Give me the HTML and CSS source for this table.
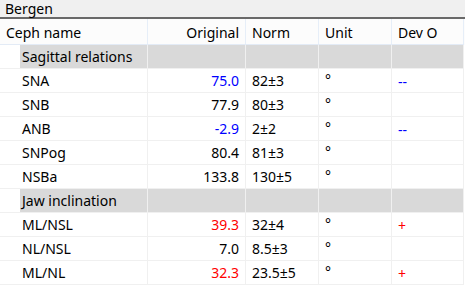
FILE: index.html
```html
<!DOCTYPE html>
<html lang="en">
<head>
    <meta charset="UTF-8">
    <title>Bergen</title>
    <link rel="stylesheet" href="styles.css">
</head>
<body>
    <div class="panel-title">Bergen</div>
    <div class="ceph-table">
        <div class="row head">
            <div class="cell">Ceph name</div>
            <div class="cell num">Original</div>
            <div class="cell">Norm</div>
            <div class="cell">Unit</div>
            <div class="cell">Dev O</div>
        </div>

        <div class="row group">
            <div class="cell name">Sagittal relations</div>
            <div class="cell"></div><div class="cell"></div><div class="cell"></div><div class="cell"></div>
        </div>
        <div class="row">
            <div class="cell name">SNA</div>
            <div class="cell num low">75.0</div>
            <div class="cell">82±3</div>
            <div class="cell unit">°</div>
            <div class="cell dev low">--</div>
        </div>
        <div class="row">
            <div class="cell name">SNB</div>
            <div class="cell num">77.9</div>
            <div class="cell">80±3</div>
            <div class="cell unit">°</div>
            <div class="cell dev"></div>
        </div>
        <div class="row">
            <div class="cell name">ANB</div>
            <div class="cell num low">-2.9</div>
            <div class="cell">2±2</div>
            <div class="cell unit">°</div>
            <div class="cell dev low">--</div>
        </div>
        <div class="row">
            <div class="cell name">SNPog</div>
            <div class="cell num">80.4</div>
            <div class="cell">81±3</div>
            <div class="cell unit">°</div>
            <div class="cell dev"></div>
        </div>
        <div class="row">
            <div class="cell name">NSBa</div>
            <div class="cell num">133.8</div>
            <div class="cell">130±5</div>
            <div class="cell unit">°</div>
            <div class="cell dev"></div>
        </div>

        <div class="row group">
            <div class="cell name">Jaw inclination</div>
            <div class="cell"></div><div class="cell"></div><div class="cell"></div><div class="cell"></div>
        </div>
        <div class="row">
            <div class="cell name">ML/NSL</div>
            <div class="cell num high">39.3</div>
            <div class="cell">32±4</div>
            <div class="cell unit">°</div>
            <div class="cell dev high">+</div>
        </div>
        <div class="row">
            <div class="cell name">NL/NSL</div>
            <div class="cell num">7.0</div>
            <div class="cell">8.5±3</div>
            <div class="cell unit">°</div>
            <div class="cell dev"></div>
        </div>
        <div class="row">
            <div class="cell name">ML/NL</div>
            <div class="cell num high">32.3</div>
            <div class="cell">23.5±5</div>
            <div class="cell unit">°</div>
            <div class="cell dev high">+</div>
        </div>
    </div>
</body>
</html>
```

FILE: styles.css
```css
* {
    margin: 0;
    padding: 0;
    box-sizing: border-box;
}

body {
    font-family: 'Noto Sans', 'Liberation Sans', sans-serif;
    font-size: 14px;
    color: #000;
    background: #fff;
    width: 465px;
    height: 287px;
    overflow: hidden;
}

.panel-title {
    height: 19px;
    padding: 1px 0 0 5px;
    line-height: 16px;
    background: #f0f0f0;
    border-bottom: 2px solid #696969;
}

.ceph-table {
    width: 465px;
}

.row {
    display: grid;
    grid-template-columns: 148px 98px 73px 73px 72px;
    height: 24px;
}

.cell {
    border-right: 1px solid #f0f0f0;
    border-bottom: 1px solid #f0f0f0;
    padding: 1px 6px 0;
    line-height: 22px;
    white-space: nowrap;
    overflow: hidden;
}

.head {
    height: 26px;
    background: #fcfcfc;
}

.head .cell {
    padding-top: 2px;
    line-height: 23px;
    border-right-color: #e6eef8;
    border-bottom-color: #e3ebf6;
}

.name {
    padding-left: 22px;
}

.num {
    text-align: right;
}

.unit {
    line-height: 20px;
}

.group .cell {
    background: #d9d9d9;
}

.group .name {
    background: linear-gradient(to right, #fff 20px, #d9d9d9 20px);
}

.low {
    color: #0000ff;
}

.high {
    color: #ff0000;
}

.dev {
    font-size: 14px;
    line-height: 24px;
}
```
